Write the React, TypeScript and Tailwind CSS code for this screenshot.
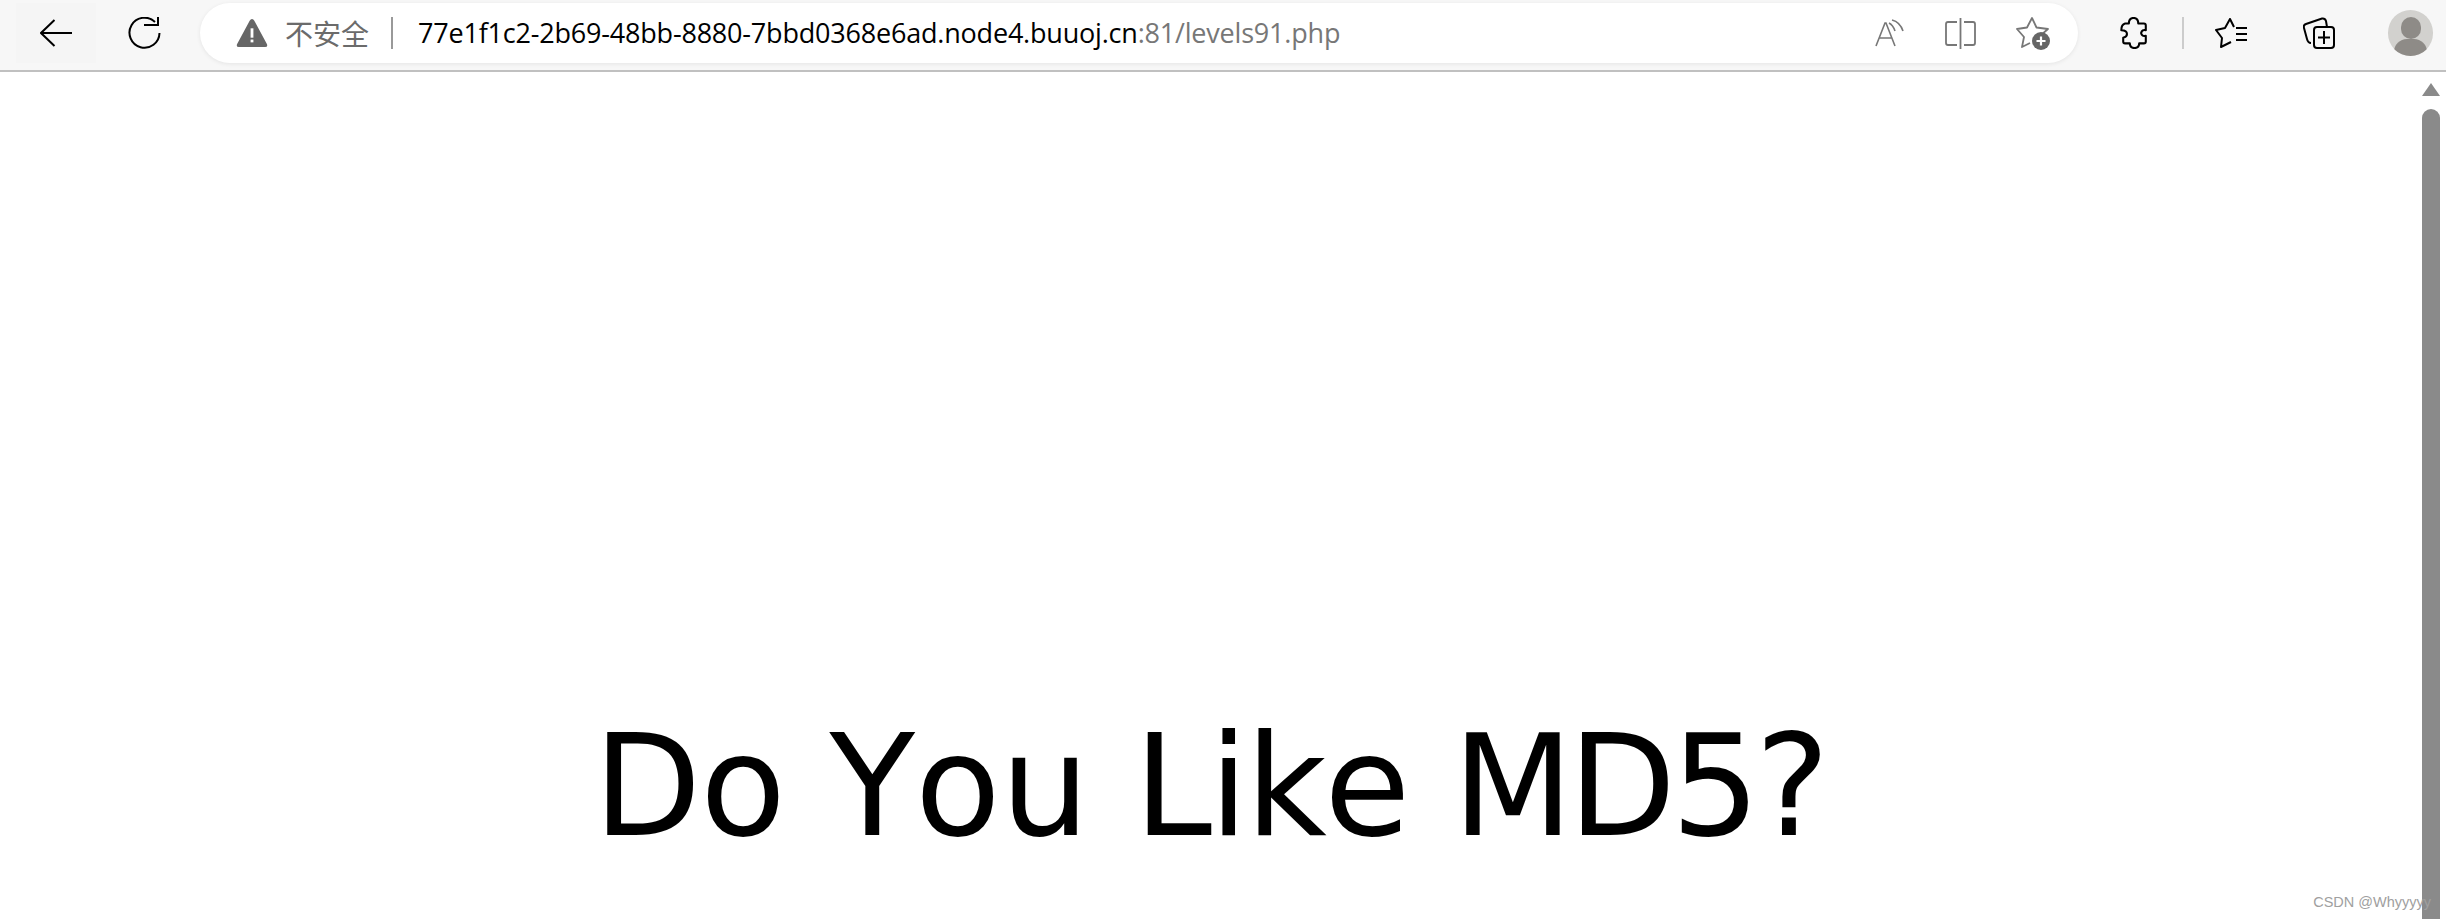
import React from 'react';

const Back = () => (
  <svg width="32" height="28" viewBox="0 0 32 28" fill="none" stroke="#000" strokeWidth="2">
    <path d="M1 14 H32 M14.5 1 L1 14 L14.5 27" />
  </svg>
);

const Reload = () => (
  <svg width="33" height="32" viewBox="0 0 33 32" fill="none" stroke="#000" strokeWidth="2">
    <path d="M27 5 A15 15 0 1 0 31.500 16" />
    <path d="M16 8 H30 V0" />
  </svg>
);

const Warning = () => (
  <svg width="32" height="30" viewBox="0 0 34 32">
    <path d="M17 1 Q18.5 1 19.5 3 L33 28 Q34 31 31 31 H3 Q0 31 1 28 L14.5 3 Q15.5 1 17 1 Z" fill="#666" />
    <rect x="15.5" y="11" width="3" height="10" fill="#fff" />
    <rect x="15.5" y="23" width="3" height="3" fill="#fff" />
  </svg>
);

const ReadAloud = () => (
  <svg width="30" height="28" viewBox="0 0 30 28" fill="none" stroke="#777" strokeWidth="1.6">
    <path d="M1 27 L10 4 H11 L20 27 M4.500 19 H16.500" />
    <path d="M14 4 Q18 6 20 12 M17 1 Q25 3 28 12" />
  </svg>
);

const SplitScreen = () => (
  <svg width="31" height="31" viewBox="0 0 31 31" fill="none" stroke="#777" strokeWidth="1.8">
    <path d="M12 4 H3 Q1 4 1 6 V25 Q1 27 3 27 H12" />
    <path d="M19 4 H28 Q30 4 30 6 V25 Q30 27 28 27 H19" />
    <path d="M15.500 0 V31" />
  </svg>
);

const FavAdd = () => (
  <svg width="34" height="33" viewBox="0 0 34 33" fill="none">
    <path d="M14 26 L6 30 L8 20 L1 12 L11 10.500 L16 1 L20.500 10.500 L32 12 L25 18" stroke="#777" strokeWidth="1.8" strokeLinejoin="round" />
    <circle cx="25" cy="24" r="9" fill="#666" />
    <path d="M20.500 24 H29.500 M25 19.500 V28.500" stroke="#fff" strokeWidth="2.2" />
  </svg>
);

const Puzzle = () => (
  <svg width="29" height="32" viewBox="0 0 30 34" fill="none" stroke="#000" strokeWidth="2.2" strokeLinejoin="round">
    <path d="M9 7 Q9 1 14 1 Q19 1 19 7 H25 Q27 7 27 9 V14 Q23 13 22 17 Q23 21 27 20 V26 Q27 28 25 28 H20 Q20 33 15 33 Q10 33 10 28 H5 Q3 28 3 26 V22 Q7 21 7 18 Q7 14 1 14 Q1 8 5 7 Z" />
  </svg>
);

const FavList = () => (
  <svg width="32" height="30" viewBox="0 0 32 30" fill="none" stroke="#000" strokeWidth="2" strokeLinejoin="round">
    <path d="M19 9 L15 1 L10 10 L1 12 L7 20 L6 29 L16 24" />
    <path d="M21 10 H32 M21 16 H32 M21 22 H32" />
  </svg>
);

const Collections = () => (
  <svg width="32" height="32" viewBox="0 0 32 32" fill="none" stroke="#000" strokeWidth="2">
    <path d="M8 26 Q5 26 4 22 L1 11 Q0 8 3 7 L19 1.500 Q22 1 23 4 L24 10" />
    <rect x="11" y="10" width="20" height="21" rx="3" />
    <path d="M21 14 V27 M15 20.500 H27" />
  </svg>
);

const Avatar = () => (
  <div className="relative h-[46px] w-[45px] overflow-hidden rounded-full bg-[#d2d1ce]">
    <div className="absolute left-[13px] top-[7px] h-[22px] w-[20px] rounded-full bg-[#8e8b87]" />
    <div className="absolute left-[6px] top-[29px] h-[26px] w-[33px] rounded-full bg-[#8e8b87]" />
  </div>
);

export default function App() {
  return (
    <div className="flex h-screen w-full flex-col overflow-hidden bg-white">
      <header className="flex h-[72px] shrink-0 items-start border-b-2 border-[#c0c0c0] bg-[#f7f7f7] pt-[3px]">
        <div className="ml-[16px] flex h-[60px] w-[80px] items-center justify-center bg-[#f5f5f5]">
          <Back />
        </div>
        <div className="ml-[32px] flex h-[60px] w-[33px] items-center justify-center">
          <Reload />
        </div>
        <div className="ml-[39px] flex h-[60px] w-[1878px] items-center rounded-full bg-white pl-[36px] shadow-[0_1px_4px_rgba(0,0,0,0.08)]">
          <Warning />
          <span className="ml-[17px] font-['Noto_Sans_CJK_SC',sans-serif] text-[28px] text-[#6b6b6b]">不安全</span>
          <div className="ml-[22px] h-[32px] w-[2px] bg-[#999]" />
          <span className="ml-[25px] font-['Open_Sans',sans-serif] text-[27px] tracking-[-0.2px] text-black">
            77e1f1c2-2b69-48bb-8880-7bbd0368e6ad.node4.buuoj.cn<span className="text-[#777]">:81/levels91.php</span>
          </span>
          <div className="ml-auto flex items-center gap-[40px] pr-[28px]">
            <ReadAloud />
            <SplitScreen />
            <FavAdd />
          </div>
        </div>
        <div className="flex h-[60px] flex-1 items-center pl-[42px]">
          <Puzzle />
          <div className="ml-[33px] h-[32px] w-[2px] bg-[#ccc]" />
          <div className="ml-[31px]"><FavList /></div>
          <div className="ml-[56px]"><Collections /></div>
          <div className="ml-[53px]"><Avatar /></div>
        </div>
      </header>
      <div className="relative flex min-h-0 flex-1">
        <main className="flex-1 overflow-hidden pr-[4px] pt-[634px] text-center font-['DejaVu_Sans',sans-serif] text-[140px] leading-[161px] text-black [font-kerning:none]">
          <span className="tracking-[-1px]">Do</span> You <span className="tracking-[-2.500px]">Like</span> <span className="tracking-[-5px]">MD5?</span>
        </main>
        <aside className="flex w-[24px] shrink-0 flex-col items-start bg-white pt-[11px]">
          <div className="h-0 w-0 border-x-[9px] border-b-[13px] border-x-transparent border-b-[#8a8a8a]" />
          <div className="mt-[13px] w-[18px] flex-1 rounded-t-full bg-[#8a8a8a]" />
        </aside>
        <span className="absolute bottom-[5px] right-[15px] font-['Liberation_Sans',sans-serif] text-[14.500px] text-[#a0a0a0]">
          CSDN @Whyyyyy
        </span>
      </div>
    </div>
  );
}
